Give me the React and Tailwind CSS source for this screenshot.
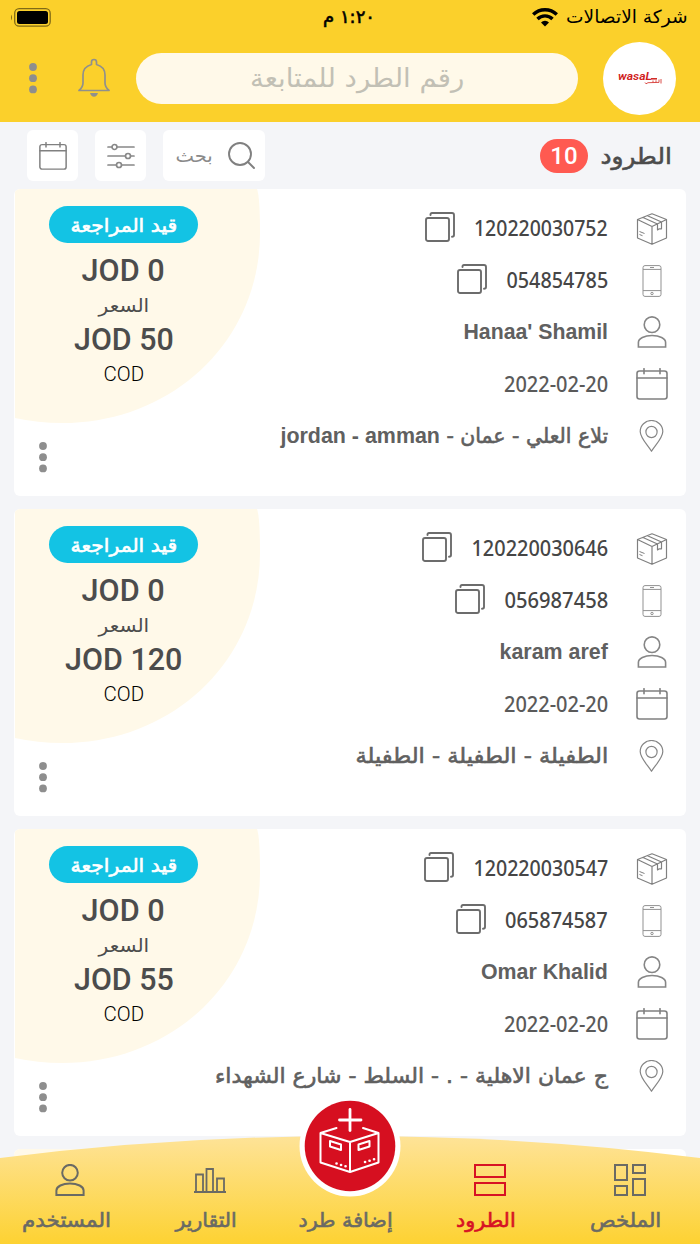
import React, { useLayoutEffect, useRef } from "react";

function Fit({ w, className = "", children, dir = "rtl" }) {
  const ref = useRef(null);
  useLayoutEffect(() => {
    const el = ref.current;
    el.style.transform = `scaleX(${w / el.offsetWidth})`;
  }, [w, children]);
  return (
    <span className="flex shrink-0 justify-center" style={{ width: w }}>
      <span ref={ref} dir={dir} className={`block shrink-0 whitespace-nowrap ${className}`}>{children}</span>
    </span>
  );
}

const arabic = "font-['DejaVu_Sans',sans-serif]";
const semi = "[-webkit-text-stroke:0.6px_currentColor]";

function Dots({ className }) {
  return (
    <svg width="10" height="32" viewBox="0 0 10 32" fill="#8e8e8e" className={className}>
      <circle cx="5" cy="5" r="3.9" /><circle cx="5" cy="16.2" r="3.9" /><circle cx="5" cy="27.4" r="3.9" />
    </svg>
  );
}

function CalendarIcon({ size = 32, sw = 1.6 }) {
  return (
    <svg width={size} height={size} viewBox="0 0 32 32" fill="none" stroke="#808080" strokeWidth={sw} strokeLinecap="round">
      <rect x="1" y="3" width="30" height="28" rx="2.5" /><path d="M1 10h30M8 .7v5M24 .7v5" />
    </svg>
  );
}

function PersonIcon({ color = "#868686", sw = 1.6, size = 32 }) {
  return (
    <svg width={size} height={size} viewBox="0 0 32 32" fill="none" stroke={color} strokeWidth={sw}>
      <circle cx="16" cy="8.7" r="7.8" /><path d="M2.4 31v-4.5c0-4 6-7 13.6-7s13.6 3 13.6 7V31z" />
    </svg>
  );
}

function BoxIcon() {
  return (
    <svg width="32" height="32" viewBox="0 0 32 32" fill="none" stroke="#808080" strokeWidth="1.2" strokeLinejoin="round" className="relative top-px">
      <path d="M16 .8 30.5 6.500v18.500L16 31.300 1.500 25V6.500zM1.500 6.500 16 13.500 30.500 6.500M16 13.500v17.800M11.500 2.700 25.500 9M7 4.500 21.500 11M21.500 11v6l1.800-1.200 2.200 0V9" />
      <path d="m3.500 18.500 5 2M3.500 21.500l3 1.200" strokeWidth="1" />
    </svg>
  );
}

function PhoneIcon() {
  return (
    <svg width="32" height="32" viewBox="0 0 32 32" fill="none" stroke="#919191" strokeWidth="1" className="relative top-px">
      <rect x="7" y=".6" width="18" height="30.800" rx="2" /><path d="M7 4.400h18M7 25.600h18M14 2.500h4" /><circle cx="16" cy="28.500" r="1.200" />
    </svg>
  );
}

function PinIcon() {
  return (
    <svg width="32" height="32" viewBox="0 0 32 32" fill="none" stroke="#868686" strokeWidth="1.200" strokeLinejoin="round">
      <path d="M15.500 31.300C12 25.500 4.200 18 4.200 11.500a11.300 11 0 0 1 22.600 0C26.800 18 19 25.500 15.500 31.300z" /><circle cx="15.500" cy="12" r="5.600" />
    </svg>
  );
}

function CopyIcon() {
  return (
    <svg width="30" height="30" viewBox="0 0 30 30" fill="none" stroke="#6c6c6c" strokeWidth="1.900" strokeLinecap="round" className="mb-0.5">
      <rect x="1" y="6" width="23" height="23" rx="2" /><path d="M5.500 3V2.500Q5.500 1 7 1h20q2 0 2 2v20q0 1.700-2 1.700" />
    </svg>
  );
}

function Row({ icon, children }) {
  return (
    <div className="flex h-[52px] items-center">
      <div className="flex w-8 shrink-0 justify-center">{icon}</div>
      <div className="mr-7 flex items-center gap-[19px]">{children}</div>
    </div>
  );
}

const num = "font-['Noto_Sans',sans-serif] text-[21.5px] leading-8 font-medium text-[#464646]";

function Card({ p }) {
  return (
    <article className="relative h-[307px] shrink-0 overflow-hidden rounded-md bg-white">
      <svg width="250" height="240" viewBox="0 0 250 240" className="absolute top-0 left-0">
        <path d="M1 0H243Q246 8 246 44C246 152 158 234 48 234Q24 234 1 229z" fill="#fff9e9" />
      </svg>
      <div className="relative flex h-full justify-between">
        <div className="flex w-0 flex-1 flex-col pt-[13px] pr-[18px]">
          <Row icon={<BoxIcon />}><Fit w={p.idW} dir="ltr" className={num}>{p.id}</Fit><CopyIcon /></Row>
          <Row icon={<PhoneIcon />}><Fit w={p.phoneW} dir="ltr" className={num}>{p.phone}</Fit><CopyIcon /></Row>
          <Row icon={<PersonIcon />}><Fit w={p.nameW} dir="ltr" className="font-['Liberation_Sans',sans-serif] text-[22px] leading-8 font-bold text-[#606060]">{p.name}</Fit></Row>
          <Row icon={<CalendarIcon />}><Fit w={104} dir="ltr" className="font-['Noto_Sans',sans-serif] text-[21.5px] leading-8 font-medium text-[#5a5a5a]">2022-02-20</Fit></Row>
          <Row icon={<PinIcon />}>
            <Fit w={p.addrW} className={`${arabic} ${semi} text-[21px] leading-8 text-[#606060]`}>
              {p.addr}{p.addrLatin && <span className="font-['Liberation_Sans',sans-serif] text-[22px] font-bold [-webkit-text-stroke:0px]">{p.addrLatin}</span>}
            </Fit>
          </Row>
        </div>
        <div className="flex w-[219px] shrink-0 flex-col items-center pt-[17px]">
          <div className="flex h-[37px] w-[149px] items-center justify-center rounded-full bg-[#13c3e4]">
            <Fit w={107} className={`${arabic} ${semi} text-[19px] leading-8 text-white`}>قيد المراجعة</Fit>
          </div>
          <div className="flex h-[56px] items-center"><Fit w={83} dir="ltr" className="font-[Roboto,sans-serif] text-[31px] leading-9 font-medium text-[#4c4c4c]">JOD 0</Fit></div>
          <div className="flex h-[12px] items-center"><Fit w={51} className={`${arabic} text-[19px] leading-6 text-[#4c4c4c]`}>السعر</Fit></div>
          <div className="flex h-[58px] items-center"><Fit w={p.codW} dir="ltr" className="font-[Roboto,sans-serif] text-[31px] leading-9 font-medium text-[#4c4c4c]">{p.cod}</Fit></div>
          <div className="flex h-[10px] items-center"><Fit w={41} dir="ltr" className="font-[Roboto,sans-serif] text-[21px] leading-6 font-light text-black">COD</Fit></div>
          <Dots className="mt-[62px] mr-[162px]" />
        </div>
      </div>
    </article>
  );
}

const parcels = [
  { id: "120220030752", idW: 134, phone: "054854785", phoneW: 102, name: "Hanaa' Shamil", nameW: 145, addr: "تلاع العلي - عمان - ", addrLatin: "jordan - amman", addrW: 328, cod: "JOD 50", codW: 100 },
  { id: "120220030646", idW: 137, phone: "056987458", phoneW: 104, name: "karam aref", nameW: 108, addr: "الطفيلة - الطفيلة - الطفيلة", addrW: 253, cod: "JOD 120", codW: 117 },
  { id: "120220030547", idW: 135, phone: "065874587", phoneW: 103, name: "Omar Khalid", nameW: 127, addr: "ج عمان الاهلية - . - السلط - شارع الشهداء", addrW: 393, cod: "JOD 55", codW: 100 },
];

function NavItem({ label, w, icon, active }) {
  return (
    <div className="flex w-[140px] flex-col items-center">
      <div className="flex h-8 items-center">{icon}</div>
      <div className="mt-2 mr-2">
        <Fit w={w} className={`${arabic} ${semi} text-[20px] leading-8 ${active ? "text-[#d71224]" : "text-[#6a6a64]"}`}>{label}</Fit>
      </div>
    </div>
  );
}

export default function App() {
  return (
    <div dir="rtl" className="relative flex h-[1244px] w-[700px] flex-col overflow-hidden bg-[#f4f5f8]">
      <header className="h-[122px] shrink-0 bg-[#fbd02b]">
        <div className="grid h-[34px] grid-cols-3 items-center pr-3 pl-[10px]">
          <div className="flex items-center gap-2">
            <Fit w={122} className={`${arabic} text-[18px] leading-8 text-black`}>شركة الاتصالات</Fit>
            <svg width="26" height="19" viewBox="0 0 26 19" fill="none" stroke="#000" strokeWidth="3.400">
              <path d="M1.200 6.500a17 17 0 0 1 23.600 0M5.500 11a10.500 10.500 0 0 1 15 0" /><path d="m9 14.500 4 4 4-4a5.500 5.500 0 0 0-8 0z" fill="#000" stroke="none" />
            </svg>
          </div>
          <div className="flex justify-center"><Fit w={52} className={`${arabic} ${semi} text-[18px] leading-8 text-black`}>١:٢٠ م</Fit></div>
          <div className="flex justify-end">
            <svg width="41" height="19" viewBox="0 0 41 19">
              <rect x="4.700" y=".7" width="35.500" height="17.500" rx="4.500" fill="none" stroke="#806a16" strokeWidth="1.300" />
              <rect x="7" y="3" width="31" height="13" rx="2.500" /><path d="M2 6.500q-2 3 0 6z" fill="#806a16" />
            </svg>
          </div>
        </div>
        <div className="flex h-[88px] items-center pr-6 pl-7">
          <div className="flex size-[73px] items-center justify-center rounded-full bg-white">
            <svg width="46" height="18" viewBox="0 0 46 18" fill="none" stroke="#d0211c" className="font-[Roboto,sans-serif] [direction:ltr]">
              <text x="1" y="10.500" fontSize="11.500" fontWeight="600" fontStyle="italic" textLength="34" lengthAdjust="spacingAndGlyphs" fill="#d0211c" stroke="none">wasaL</text>
              <path d="M34 9.800h6" strokeWidth="1.500" />
              <path d="M28 13.500q.5 2.500 3 .2l11-.3V10.500M36 13.300V11.500M39 13.300v-2M44 10v4.500" strokeWidth=".8" />
            </svg>
          </div>
          <div className="mr-[25px] flex h-[51px] w-[442px] items-center justify-center rounded-full bg-[#fff9e9]">
            <Fit w={214} className={`${arabic} text-[26px] leading-9 text-[#c2c0b5]`}>رقم الطرد للمتابعة</Fit>
          </div>
          <svg className="mr-[26px]" width="32" height="40" viewBox="0 0 32 40" fill="none" stroke="#90908c" strokeWidth="1.700" strokeLinejoin="round">
            <path d="M13.500 6.500V4q0-2.500 2.500-2.500T18.500 4v2.500C24 8 27 11.500 27 17v8q0 4 4 7.500H1Q5 29 5 25v-8C5 11.500 8 8 13.500 6.500z" /><path d="M12 35h8q-1 3.700-4 3.700T12 35z" fill="#90908c" stroke="none" />
          </svg>
          <Dots className="mr-auto" />
        </div>
      </header>
      <div className="flex h-[67px] shrink-0 items-center pr-7 pl-[27px]">
        <Fit w={71} className={`${arabic} ${semi} text-[23px] leading-9 text-[#4c4c4c]`}>الطرود</Fit>
        <div className="mr-[13px] flex h-[34px] w-12 items-center justify-center rounded-full bg-[#ff5a51]">
          <Fit w={27} dir="ltr" className="font-[Roboto,sans-serif] text-[24px] leading-8 font-medium text-white">10</Fit>
        </div>
        <div className="mr-auto flex gap-[17px]">
          <div className="flex h-[51px] w-[102px] items-center gap-[15px] rounded-md bg-white pr-2.5">
            <svg width="27" height="27" viewBox="0 0 27 27" fill="none" stroke="#808080" strokeWidth="1.900" strokeLinecap="round"><circle cx="12" cy="12" r="11" /><path d="m20 20 6 6" /></svg>
            <Fit w={37} className={`${arabic} text-[18px] leading-8 text-[#8a8a8a]`}>بحث</Fit>
          </div>
          <div className="flex size-[51px] items-center justify-center rounded-md bg-white">
            <svg width="28" height="26" viewBox="0 0 28 26" fill="#fff" stroke="#888" strokeWidth="1.700" strokeLinecap="round"><path d="M1 4h26M1 13h26M1 22h26" /><circle cx="7.500" cy="4" r="2.500" /><circle cx="21" cy="13" r="2.500" /><circle cx="12" cy="22" r="2.500" /></svg>
          </div>
          <div className="flex size-[51px] items-center justify-center rounded-md bg-white"><CalendarIcon size={28} sw={1.7} /></div>
        </div>
      </div>
      <main className="flex flex-col gap-[13px] px-3.5">
        {parcels.map((p) => <Card key={p.id} p={p} />)}
        <div className="h-[100px] shrink-0 overflow-hidden rounded-md bg-white"><div className="mr-auto h-full w-[245px] bg-[#fff9e9]" /></div>
      </main>
      <nav className="absolute bottom-0 left-0 h-[144px] w-[700px]">
        <svg width="700" height="144" viewBox="0 0 700 144" className="absolute inset-0">
          <defs><linearGradient id="g" x1="0" y1="0" x2="0" y2="1"><stop stopColor="#fee398" /><stop offset="1" stopColor="#fdd232" /></linearGradient></defs>
          <path d="M0 58Q175 36 350 36T700 58V144H0z" fill="url(#g)" />
          <circle cx="350" cy="46" r="50.500" fill="#fff" /><circle cx="350" cy="46" r="45.300" fill="#d60f20" />
          <g fill="none" stroke="#fff" strokeWidth="2" strokeLinejoin="round" strokeLinecap="round">
            <path d="M350 9.500v21" strokeWidth="2.800" /><path d="M339.500 20h21.500" strokeWidth="2.800" />
            <path d="M336.500 28 320.500 33 350 42l28.500-9-15.500-5M320.500 33v29.500L350 72l28.500-9.500V33M350 42v30M330 41l11 3.500v5.500l-11-3.500zM369.500 41l-11 3.500v5.500l11-3.500z" />
            <path d="M336.500 63.500h.1M341 65h.1M345.500 66.300h.1M365 62h.1M369.500 60.700h.1M374 59.300h.1" strokeWidth="2.600" />
          </g>
        </svg>
        <div className="relative flex pt-16">
          <NavItem label="الملخص" w={71} icon={<svg width="32" height="32" viewBox="0 0 32 32" fill="none" stroke="#6a6a64" strokeWidth="2"><path d="M1 1h12v15H1zM1 22h12v9H1zM19 1h12v8H19zM19 15h12v16H19z" /></svg>} />
          <NavItem label="الطرود" w={60} active icon={<svg width="32" height="32" viewBox="0 0 32 32" fill="none" stroke="#d71224" strokeWidth="2"><path d="M1 1h30v12H1zM1 19h30v12H1z" /></svg>} />
          <NavItem label="إضافة طرد" w={94} icon={null} />
          <NavItem label="التقارير" w={61} icon={<svg width="32" height="26" viewBox="0 0 32 26" fill="none" stroke="#6a6a64" strokeWidth="1.800"><path d="M0 25h32M2 25V7.500h7V25M12.500 25V2h6.500v23M23 25V11.500h7V25" /></svg>} />
          <NavItem label="المستخدم" w={89} icon={<PersonIcon color="#6a6a64" sw={2} />} />
        </div>
      </nav>
    </div>
  );
}
